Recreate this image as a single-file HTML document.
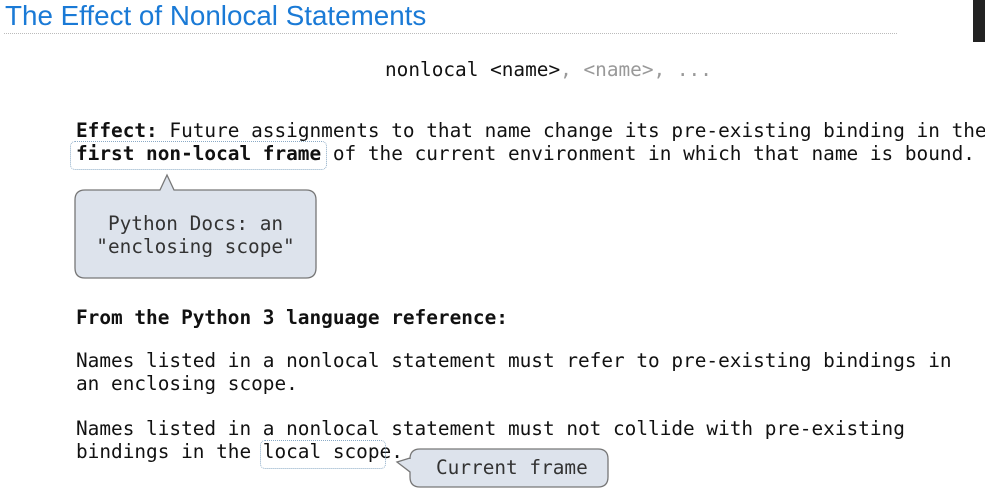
<!DOCTYPE html>
<html><head><meta charset="utf-8"><style>
html,body{margin:0;padding:0;background:#fff;width:985px;height:491px;overflow:hidden;position:relative}
.t{position:absolute;left:5px;top:0px;font-family:"Liberation Sans",sans-serif;font-size:27.8px;color:#1a7ad6;white-space:nowrap}
.hr{position:absolute;left:4px;top:33px;width:893px;border-top:1px dotted #bbb}
.bar{position:absolute;left:973px;top:0;width:12px;height:42px;background:#222}
.m{position:absolute;font-family:"DejaVu Sans Mono","Liberation Mono",monospace;font-size:19.4px;line-height:23px;white-space:pre;color:#111}
b{font-weight:bold}
.g{color:#999}
.box{position:absolute;border:1px dotted #8aaac6;border-radius:5px}
svg{position:absolute;left:0;top:0}
</style></head><body>
<div class="t">The Effect of Nonlocal Statements</div>
<div class="hr"></div>
<div class="bar"></div>
<svg width="985" height="491">
<path d="M85 190 H160 L167 175 L174 190 H306 Q316 190 316 200 V268 Q316 278 306 278 H85 Q75 278 75 268 V200 Q75 190 85 190 Z" fill="#dde3ec" stroke="#777" stroke-width="1.3"/>
<path d="M420 449 H598 Q608 449 608 459 V477 Q608 487 598 487 H420 Q410 487 410 477 V472 L397 462 L410 458 V459 Q410 449 420 449 Z" fill="#dde3ec" stroke="#777" stroke-width="1.3"/>
</svg>
<div class="m" style="left:385px;top:58px">nonlocal &lt;name&gt;<span class="g">, &lt;name&gt;, ...</span></div>
<div class="m" style="left:76px;top:119px"><b>Effect:</b> Future assignments to that name change its pre-existing binding in the
<b>first non-local frame</b> of the current environment in which that name is bound.</div>
<div class="box" style="left:70px;top:141px;width:255px;height:27px"></div>
<div class="m" style="left:75px;width:241px;top:212px;color:#333;text-align:center">Python Docs: an<br>"enclosing scope"</div>
<div class="m" style="left:76px;top:306px"><b>From the Python 3 language reference:</b></div>
<div class="m" style="left:76px;top:349px">Names listed in a nonlocal statement must refer to pre-existing bindings in
an enclosing scope.</div>
<div class="m" style="left:76px;top:417px">Names listed in a nonlocal statement must not collide with pre-existing
bindings in the local scope.</div>
<div class="box" style="left:260px;top:440px;width:124px;height:27px"></div>
<div class="m" style="left:436px;top:456px;color:#333">Current frame</div>
</body></html>
